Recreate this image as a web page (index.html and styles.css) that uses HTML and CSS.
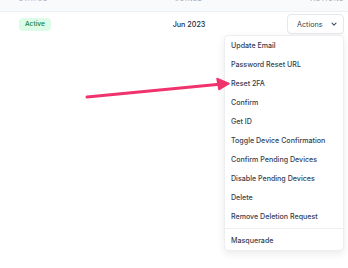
FILE: index.html
```html
<!DOCTYPE html>
<html lang="en">

<head>
  <meta charset="UTF-8" />
  <meta name="viewport" content="width=device-width, initial-scale=1.0" />
  <title>Users</title>
  <link rel="stylesheet" href="styles.css">
</head>

<body>
  <div class="table">
    <!-- HEADER -->
    <div class="row head">
      <span>Status</span>
      <span class="center">Joined</span>
      <span class="right">Actions</span>
    </div>

    <!-- USER ROW -->
    <div class="row user">
      <span><span class="badge">Active</span></span>
      <span class="center joined">Jun 2023</span>
      <span class="right">
        <span class="dropdown">
          <button class="actionsBtn">Actions
            <svg width="8" height="8" viewBox="0 0 10 10" fill="none" stroke="#4b5563" stroke-width="1.4" stroke-linecap="round" stroke-linejoin="round">
              <path d="M2.5 4l2.5 2.5L7.5 4" />
            </svg>
          </button>
          <ul class="menu">
            <li>Update Email</li>
            <li>Password Reset URL</li>
            <li>Reset 2FA</li>
            <li>Confirm</li>
            <li>Get ID</li>
            <li>Toggle Device Confirmation</li>
            <li>Confirm Pending Devices</li>
            <li>Disable Pending Devices</li>
            <li>Delete</li>
            <li>Remove Deletion Request</li>
            <li class="divider">Masquerade</li>
          </ul>
        </span>
      </span>
    </div>
  </div>

  <!-- annotation arrow -->
  <svg class="arrow" width="348" height="268" viewBox="0 0 348 268">
    <path d="M87 97 L222 84" stroke="#f0336c" stroke-width="3" stroke-linecap="round" fill="none" />
    <path d="M229 83.5 L217 78.5 L219 89.5 Z" fill="#f0336c" stroke="#f0336c" stroke-width="1.5" stroke-linejoin="round" />
  </svg>
</body>

</html>
```

FILE: styles.css
```css
body {
  font-family: Inter, "Noto Sans", sans-serif;
  margin: 0;
  background-color: #fff;
  color: #374151;
  width: 348px;
  height: 268px;
  overflow: hidden;
  position: relative;
}

.row {
  display: grid;
  grid-template-columns: 100px 140px 1fr;
  align-items: center;
  padding: 0 4px 0 19px;
}

.center {
  text-align: center;
}

.right {
  text-align: right;
}

.head {
  height: 11px;
  background-color: #f9fafb;
  border-bottom: 1px solid #eef0f2;
  font-size: 6.5px;
  letter-spacing: 0.1em;
  text-transform: uppercase;
  color: #9ca3af;
  line-height: 8px;
  align-items: start;
  overflow: hidden;
}

.head span {
  margin-top: -5px;
}

.user {
  height: 22px;
  padding-top: 1px;
  font-size: 7.2px;
}

.badge {
  display: inline-block;
  background-color: #dcfce7;
  color: #15803d;
  font-size: 6.6px;
  font-weight: 500;
  padding: 2px 6px;
  border-radius: 4px;
  line-height: 9px;
}

.joined {
  font-weight: 500;
  color: #1f2937;
}

.dropdown {
  position: relative;
  display: inline-block;
}

.actionsBtn {
  font-family: inherit;
  font-size: 7.2px;
  color: #374151;
  background: #fff;
  border: 1px solid #e5e7eb;
  border-radius: 4px;
  height: 20px;
  width: 57px;
  padding: 0 0 0 9px;
  display: flex;
  align-items: center;
  gap: 7px;
  box-shadow: 0 1px 1px rgba(0, 0, 0, 0.03);
}

.menu {
  position: absolute;
  top: 21px;
  right: 0;
  width: 118px;
  margin: 0;
  padding: 0;
  list-style: none;
  text-align: left;
  background: #fff;
  border: 1px solid #eceef1;
  border-radius: 4px;
  box-shadow: 0 3px 8px rgba(0, 0, 0, 0.08);
}

.menu li {
  height: 19px;
  line-height: 19px;
  padding-left: 6px;
  font-size: 7.1px;
  font-weight: 500;
  color: #374151;
  white-space: nowrap;
}

.menu li.divider {
  border-top: 1px solid #eef0f2;
  margin-top: 2px;
  padding-top: 2px;
}

.arrow {
  position: absolute;
  left: 0;
  top: 0;
  pointer-events: none;
}
```
